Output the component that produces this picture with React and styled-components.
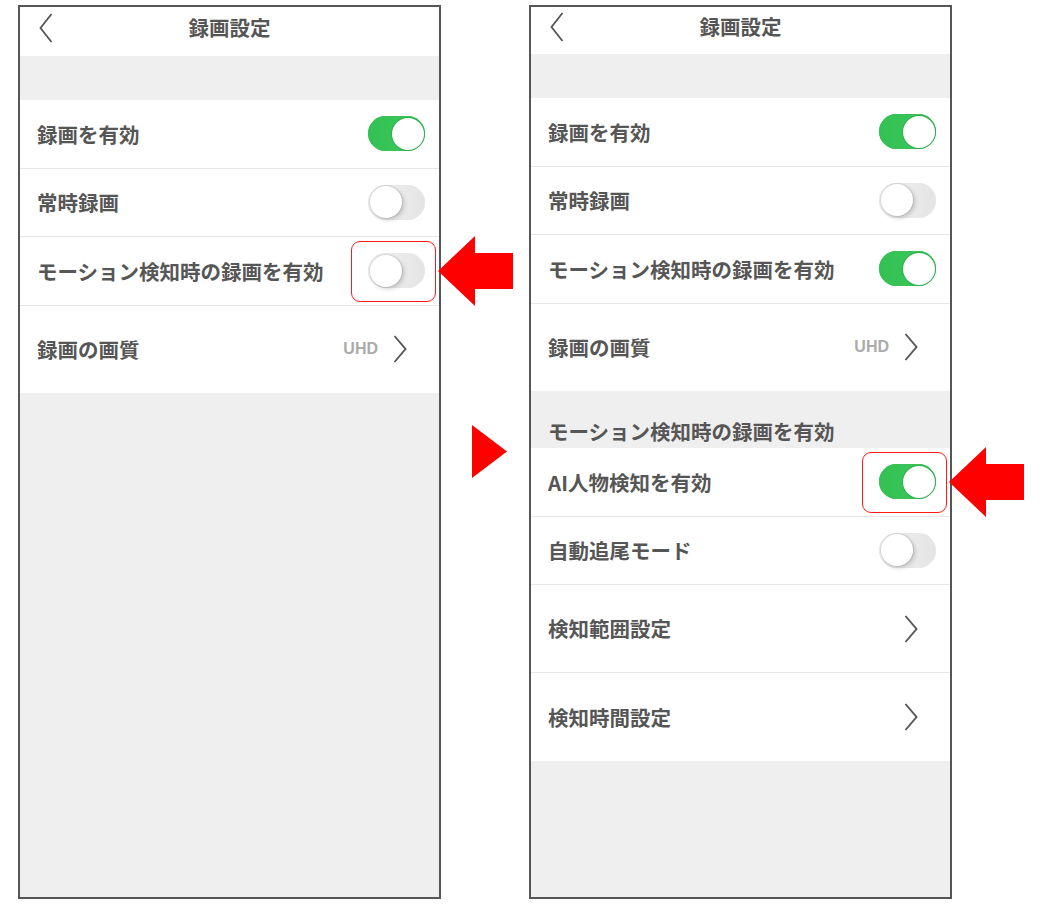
import React from "react";
import styled, { createGlobalStyle } from "styled-components";

const Global = createGlobalStyle`
  html, body { margin: 0; padding: 0; background: #ffffff; }
  body { font-family: "Noto Sans CJK JP", "Noto Sans", sans-serif; }
  * { box-sizing: border-box; }
`;

const Stage = styled.div`
  display: flex;
  align-items: flex-start;
  padding: 5px 0 0 18px;
  width: 1058px;
  height: 906px;
`;

const Phone = styled.div`
  width: 423px;
  height: 894px;
  border: 2px solid #565656;
  background: #efefef;
  display: flex;
  flex-direction: column;
`;

const Header = styled.div`
  height: ${(p) => p.$h}px;
  background: #fff;
  display: grid;
  grid-template-columns: 1fr auto 1fr;
  align-items: center;
  padding: 0 0 8px 0;
  flex-shrink: 0;
`;

const BackSlot = styled.div`
  display: flex;
  align-items: center;
  padding-left: 19px;
`;

const Title = styled.div`
  font-size: 20.5px;
  font-weight: 700;
  color: #555;
  line-height: 1;
`;

const Spacer = styled.div`
  height: ${(p) => p.$h}px;
  flex-shrink: 0;
`;

const Row = styled.div`
  height: ${(p) => p.$h}px;
  flex-shrink: 0;
  background: #fff;
  display: flex;
  align-items: center;
  justify-content: space-between;
  padding: 0 ${(p) => (p.$link ? 32 : 14)}px 0 17px;
  border-bottom: ${(p) => (p.$last ? "none" : "1px solid #e6e6e6")};
`;

const Label = styled.span`
  font-size: 20.5px;
  font-weight: 700;
  color: #565656;
  line-height: 1;
  white-space: nowrap;
`;

const SectionHead = styled.div`
  height: ${(p) => p.$h}px;
  flex-shrink: 0;
  display: flex;
  align-items: flex-end;
  padding: 0 0 7px 17px;
`;

const Trail = styled.div`
  display: flex;
  align-items: center;
  gap: 15px;
`;

const Value = styled.span`
  font-family: "Liberation Sans", Arial, sans-serif;
  font-weight: 700;
  font-size: 16px;
  color: #ababab;
`;

const ToggleWrap = styled.div`
  position: relative;
  width: 57px;
  height: 35px;
`;

const Toggle = styled.div`
  width: 57px;
  height: 35px;
  border-radius: 18px;
  background: ${(p) =>
    p.$on ? "linear-gradient(90deg, #33c153, #3cc95e)" : "linear-gradient(90deg, #f2f2f2, #e4e4e4)"};
  box-shadow: ${(p) => (p.$on ? "inset 0 0 0 1px #3cbf5a" : "inset 0 0 0 1px #e8e8e8")};
  display: flex;
  align-items: center;
  justify-content: ${(p) => (p.$on ? "flex-end" : "flex-start")};
  padding: 0 1.5px;
`;

const Knob = styled.div`
  width: 32px;
  height: 32px;
  border-radius: 50%;
  background: #fff;
  box-shadow: ${(p) =>
    p.$on
      ? "0 0 0 1px rgba(40,150,60,0.45)"
      : "0 0 0 1px rgba(0,0,0,0.08), 2px 2px 4px rgba(0,0,0,0.18)"};
`;

const Highlight = styled.div`
  position: absolute;
  left: -17px;
  right: -11px;
  top: -12px;
  bottom: -14px;
  border: 1.5px solid #ff1a1a;
  border-radius: 9px;
  pointer-events: none;
`;

const PointerArrow = styled.svg`
  position: absolute;
  left: calc(100% + 13px);
  top: -17px;
  width: 75px;
  height: 70px;
  z-index: 2;
`;

const Gutter = styled.div`
  width: 88px;
  flex-shrink: 0;
  padding: 420px 0 0 31px;
`;

const Chevron = ({ back }) =>
  back ? (
    <svg width="14" height="30" viewBox="0 0 14 30">
      <polyline points="12.5,1 1.5,15 12.5,29" fill="none" stroke="#555" strokeWidth="1.8" strokeLinejoin="miter" />
    </svg>
  ) : (
    <svg width="14" height="28" viewBox="0 0 14 28">
      <polyline points="1.5,1 12.5,14 1.5,27" fill="none" stroke="#555" strokeWidth="1.9" />
    </svg>
  );

const Switch = ({ on, marked }) => (
  <ToggleWrap>
    <Toggle $on={on}>
      <Knob $on={on} />
    </Toggle>
    {marked && (
      <>
        <Highlight />
        <PointerArrow viewBox="0 0 75 70">
          <polygon points="0,35 37,0 37,17 75,17 75,53 37,53 37,70" fill="#ff0000" />
        </PointerArrow>
      </>
    )}
  </ToggleWrap>
);

const ToggleRow = ({ label, on, marked, h = 68.5 }) => (
  <Row $h={h}>
    <Label>{label}</Label>
    <Switch on={on} marked={marked} />
  </Row>
);

const LinkRow = ({ label, value, last, h = 88 }) => (
  <Row $h={h} $link $last={last}>
    <Label>{label}</Label>
    <Trail>
      {value && <Value>{value}</Value>}
      <Chevron />
    </Trail>
  </Row>
);

const NavBar = ({ h }) => (
  <Header $h={h}>
    <BackSlot>
      <Chevron back />
    </BackSlot>
    <Title>録画設定</Title>
    <span />
  </Header>
);

export default function App() {
  return (
    <>
      <Global />
      <Stage>
        <Phone>
          <NavBar h={49} />
          <Spacer $h={44} />
          <ToggleRow label="録画を有効" on />
          <ToggleRow label="常時録画" />
          <ToggleRow label="モーション検知時の録画を有効" marked />
          <LinkRow label="録画の画質" value="UHD" last h={87.5} />
        </Phone>
        <Gutter>
          <svg width="35" height="53" viewBox="0 0 35 53">
            <polygon points="0,0 35,26.5 0,53" fill="#ff0000" />
          </svg>
        </Gutter>
        <Phone>
          <NavBar h={47} />
          <Spacer $h={44} />
          <ToggleRow label="録画を有効" on />
          <ToggleRow label="常時録画" />
          <ToggleRow label="モーション検知時の録画を有効" on />
          <LinkRow label="録画の画質" value="UHD" last h={87.5} />
          <SectionHead $h={57}>
            <Label>モーション検知時の録画を有効</Label>
          </SectionHead>
          <ToggleRow label="AI人物検知を有効" on marked />
          <ToggleRow label="自動追尾モード" />
          <LinkRow label="検知範囲設定" />
          <LinkRow label="検知時間設定" last />
        </Phone>
      </Stage>
    </>
  );
}
